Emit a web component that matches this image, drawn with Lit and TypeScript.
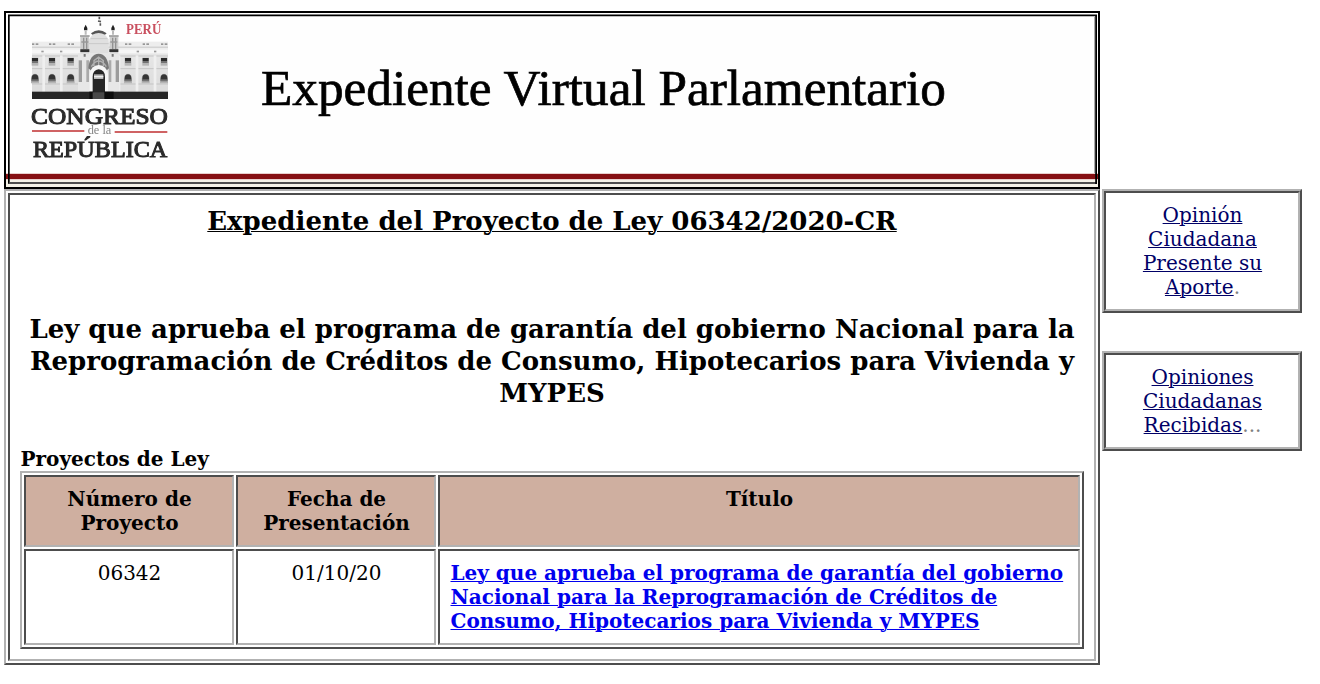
import { LitElement, html, css, svg } from "lit";
import { customElement } from "lit/decorators.js";

@customElement("page-banner")
class PageBanner extends LitElement {
  static styles = css`
    :host { display: block; width: 1096px; height: 178px; }
    svg { display: block; }
    .title { font-family: "Liberation Serif", serif; font-size: 51px; fill: #000; stroke: #000; stroke-width: 0.7px; }
    .logo { font-family: "Liberation Serif", serif; fill: #2a2a2a; stroke: #2a2a2a; stroke-width: 3px; }
    .peru { font-family: "Liberation Serif", serif; font-weight: bold; fill: #c9505f; }
    .small { font-family: "Liberation Serif", serif; fill: #858585; }
  `;

  private windows() {
    const xs = [45, 96, 152, 324, 377, 432];
    return xs.map((x) => svg`
      <g>
        <rect x=${x - 10} y="143" width="20" height="24" fill="#b4b4b4"/>
        <rect x=${x - 9} y="144" width="18" height="9" fill="#292929"/>
        <rect x=${x - 9} y="153" width="18" height="6" fill="#737373"/>
        <path d="M${x - 12} 220v-14a12 15 0 0 1 24 0v14z" fill="#b5b5b5"/>
        <path d="M${x - 10} 212v-7a10 12 0 0 1 20 0v7z" fill="#363636"/>
        <rect x=${x - 10} y="208" width="20" height="6" fill="#727272"/>
        <rect x=${x - 9} y="100" width="7" height="5" fill="#969696"/>
        <rect x=${x + 2} y="100" width="8" height="5" fill="#969696"/>
      </g>`);
  }

  render() {
    return html`
      <svg width="1096" height="178" viewBox="4 11 1096 178">
        <defs>
          <filter id="soft" x="-5%" y="-5%" width="110%" height="110%"><feGaussianBlur stdDeviation="1.5"/></filter>
          <linearGradient id="wall" x1="0" y1="0" x2="0" y2="1">
            <stop offset="0" stop-color="#e6e6e6"/><stop offset="1" stop-color="#dcdcdc"/>
          </linearGradient>
        </defs>
        <rect x="4" y="11" width="1096" height="178" fill="#fefefe"/>
        <rect x="6" y="180" width="1092" height="7" fill="#f5f3e8"/>
        <rect x="6" y="173" width="1092" height="7" fill="#e9cfcd"/>
        <rect x="6" y="174" width="1092" height="5" fill="#861013"/>
        <g transform="translate(20 10) scale(.33333)" filter="url(#soft)">
          <rect x="36" y="95" width="408" height="34" fill="#ededed"/>
          <rect x="36" y="110" width="408" height="3" fill="#c6c6c6"/>
          <rect x="36" y="119" width="408" height="12" fill="#f6f6f6"/>
          <rect x="36" y="130" width="408" height="117" fill="url(#wall)"/>
          <path d="M36 138h408M36 176h408M36 222h408" stroke="#c4c4c4" stroke-width="3"/>
          ${[67, 123, 353, 405].map((x) => svg`<rect x=${x - 3} y="122" width="7" height="5" fill="#999"/>`)}
          ${[71, 124, 297, 351, 405].map((x) => svg`<path d="M${x} 136v110" stroke="#efefef" stroke-width="8"/>`)}
          ${this.windows()}
          <rect x="174" y="130" width="124" height="117" fill="#e7e7e7"/>
          <path d="M207 88Q236 44 266 88V130H207z" fill="#e0e0e0"/>
          <path d="M213 70Q236 52 260 70L255 74Q236 64 217 74z" fill="#555"/>
          <path d="M212 86h50M207 101h59" stroke="#c9c9c9" stroke-width="3"/>
          <rect x="181" y="77" width="26" height="53" fill="#cdcdcd"/>
          <rect x="269" y="77" width="26" height="53" fill="#cdcdcd"/>
          <path d="M191 83v34M200 83v34M278 83v34M287 83v34" stroke="#929292" stroke-width="4"/>
          <path d="M180 78h29M267 78h29M184 96h21M271 96h21" stroke="#999" stroke-width="4"/>
          <path d="M181 118h27v8h-27zM268 118h27v8h-27z" fill="#333"/>
          <path d="M197 44l5 10v7h-10v-7zM279 44l5 10v7h-10v-7z" fill="#222"/>
          <path d="M194 62h6v12h-6zM276 62h6v12h-6z" fill="#bbb"/>
          <path d="M238 20v8M234 33l9 2M241 40v7" stroke="#555" stroke-width="5"/>
          <path d="M194 132v8M278 132v8" stroke="#777" stroke-width="6"/>
          <rect x="176" y="151" width="10" height="65" fill="#9c9c9c"/>
          <rect x="287" y="151" width="10" height="65" fill="#9c9c9c"/>
          <path d="M203 151v65M270 151v65" stroke="#aaa" stroke-width="8"/>
          <path d="M205 175Q209 132 236 131Q263 132 267 175L259 182H214z" fill="#777"/>
          <path d="M214 170q22-34 45 0M222 168v-16l14-11 14 11v16M236 141v28" fill="none" stroke="#b1b1b1" stroke-width="4"/>
          <path d="M209 245V192q4-25 27-27q24 2 28 27v53z" fill="#f6f6f6"/>
          <path d="M218 250V201q0-21 18-23q19 2 19 23v49z" fill="#262626"/>
          <rect x="222" y="193" width="28" height="14" fill="#b6b6b6"/>
          <path d="M222 200h28" stroke="#eee" stroke-width="4"/>
          <rect x="36" y="245" width="408" height="22" fill="#272727"/>
          <rect x="208" y="245" width="13" height="22" fill="#111"/>
          <rect x="252" y="245" width="29" height="22" fill="#111"/>
          <rect x="218" y="247" width="35" height="20" fill="#484848"/>
          <text class="peru" x="318" y="73" font-size="42" textLength="106" lengthAdjust="spacingAndGlyphs">PERÚ</text>
          <text class="logo" x="33" y="342" font-size="71" textLength="411" lengthAdjust="spacingAndGlyphs">CONGRESO</text>
          <path d="M36 363h157M284 366h158" stroke="#cf6264" stroke-width="6"/>
          <text class="small" x="203" y="373" font-size="36" textLength="71" lengthAdjust="spacingAndGlyphs">de la</text>
          <text class="logo" x="39" y="442" font-size="69" textLength="403" lengthAdjust="spacingAndGlyphs">REPÚBLICA</text>
        </g>
        <text class="title" x="261" y="105" textLength="685" lengthAdjust="spacingAndGlyphs">Expediente Virtual Parlamentario</text>
        <rect x="5" y="12" width="1094" height="176" fill="none" stroke="#000" stroke-width="2"/>
        <path d="M8 184V14.500H1097V16.200H9.700V184z" fill="#000"/>
        <path d="M9.500 182H1096V184H8z" fill="#4f4f4f"/>
        <path d="M1095.200 15H1097V184H1095.200z" fill="#000"/>
        <path d="M1094.500 17V173" stroke="#aaa" stroke-width="1"/>
      </svg>`;
  }
}

@customElement("opinion-box")
class OpinionBox extends LitElement {
  static properties = { label: {}, tail: {} };
  declare label: string;
  declare tail: string;
  static styles = css`
    :host { display: block; box-sizing: border-box; width: 200px; border: 2px solid; border-color: #b2b2b2 #4d4d4d #4d4d4d #b2b2b2; }
    .cell { border: 2px solid; border-color: #4d4d4d #b2b2b2 #b2b2b2 #4d4d4d; padding: 10px 29.5px 10px 30.5px; text-align: center; color: #808080; }
    a { color: #000066; text-decoration: underline; text-decoration-thickness: 1px; }
  `;
  render() {
    return html`<div class="cell"><a href="#">${this.label}</a>${this.tail}</div>`;
  }
}

@customElement("app-root")
class AppRoot extends LitElement {
  static styles = css`
    :host { display: block; padding: 11px 0 0 4px; height: 684px; box-sizing: border-box; overflow: hidden; background: #fff; color: #000; font: 20px/24px "DejaVu Serif", serif; }
    .row { display: flex; align-items: flex-start; gap: 2px; }
    .side { display: flex; flex-direction: column; gap: 38px; }
    .outset { border: 2px solid; border-color: #b2b2b2 #4d4d4d #4d4d4d #b2b2b2; padding: 2px; box-sizing: border-box; }
    .inset { border: 2px solid; border-color: #4d4d4d #b2b2b2 #b2b2b2 #4d4d4d; box-sizing: border-box; }
    .main { width: 1096px; height: 476px; }
    .content { height: 468px; padding: 10px; }
    h1, h2, h3 { margin: 0; text-align: center; font-weight: bold; font-size: 26px; line-height: 32px; }
    h1 { text-decoration: underline; text-decoration-thickness: 1px; }
    h2 { margin-top: 76px; }
    h3 { margin-top: 38px; padding-left: 0.5px; font-size: 20px; line-height: 24px; text-align: left; }
    .grid { display: grid; grid-template-columns: 210px 200px 642px; grid-template-rows: 72px 96px; gap: 2px; width: 1064px; height: 178px; }
    .cell { padding: 10px 9.5px 10px 10.5px; text-align: center; }
    .head { background: #cfafa0; font-weight: bold; }
    .left { text-align: left; font-weight: bold; }
    .left a { color: #0000ee; text-decoration-thickness: 1px; }
  `;
  render() {
    return html`
      <page-banner></page-banner>
      <div class="row">
        <main class="outset main">
          <div class="inset content">
            <h1>Expediente del Proyecto de Ley 06342/2020-CR</h1>
            <h2>Ley que aprueba el programa de garantía del gobierno Nacional para la<br>Reprogramación de Créditos de Consumo, Hipotecarios para Vivienda y<br>MYPES</h2>
            <h3>Proyectos de Ley</h3>
            <div class="outset grid">
              <div class="inset cell head">Número de<br>Proyecto</div>
              <div class="inset cell head">Fecha de<br>Presentación</div>
              <div class="inset cell head">Título</div>
              <div class="inset cell">06342</div>
              <div class="inset cell">01/10/20</div>
              <div class="inset cell left"><a href="#">Ley que aprueba el programa de garantía del gobierno Nacional para la Reprogramación de Créditos de Consumo, Hipotecarios para Vivienda y MYPES</a></div>
            </div>
          </div>
        </main>
        <aside class="side">
          <opinion-box label="Opinión Ciudadana Presente su Aporte" tail="."></opinion-box>
          <opinion-box label="Opiniones Ciudadanas Recibidas" tail="..."></opinion-box>
        </aside>
      </div>`;
  }
}
